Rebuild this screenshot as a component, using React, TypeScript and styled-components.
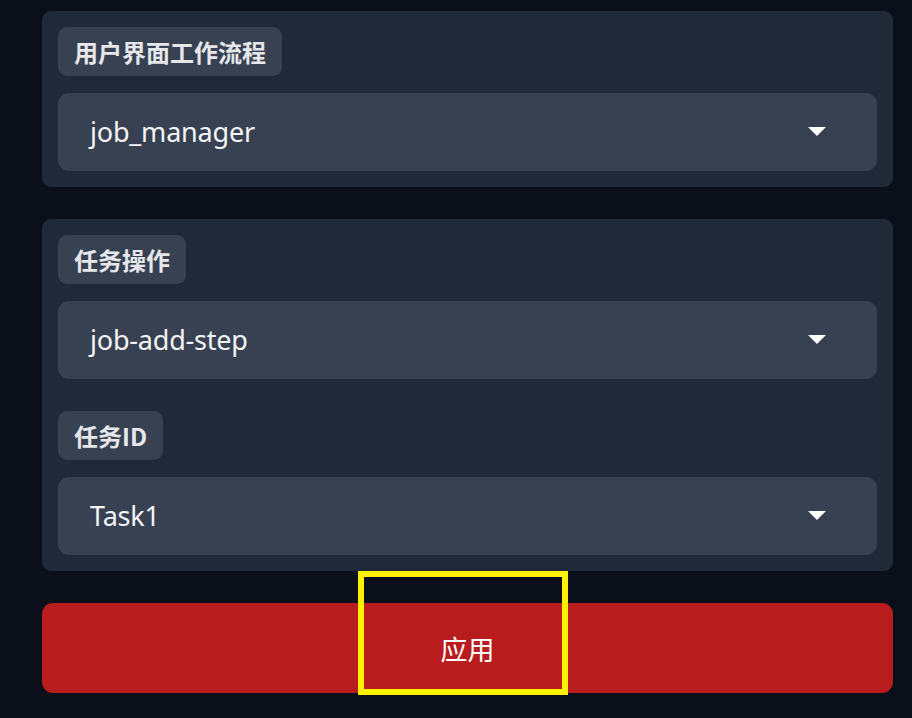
import React from 'react';
import styled, { createGlobalStyle } from 'styled-components';

const GlobalStyle = createGlobalStyle`
  html, body {
    margin: 0;
    padding: 0;
    background: #0b0f19;
  }
  body {
    font-family: 'Noto Sans', 'Noto Sans CJK SC', sans-serif;
  }
`;

interface Field {
  label: string;
  value: string;
}

const groups: Field[][] = [
  [{ label: '用户界面工作流程', value: 'job_manager' }],
  [
    { label: '任务操作', value: 'job-add-step' },
    { label: '任务ID', value: 'Task1' },
  ],
];

const Dropdown: React.FC<Field> = props => {
  return (
    <Block>
      <Label>{props.label}</Label>
      <Select>
        <Value>{props.value}</Value>
        <Caret />
      </Select>
    </Block>
  );
};

const App: React.FC = () => {
  return (
    <Page>
      <GlobalStyle />
      {groups.map((fields, i) => (
        <Panel key={i}>
          {fields.map(f => (
            <Dropdown key={f.label} label={f.label} value={f.value} />
          ))}
        </Panel>
      ))}
      <ApplyButton>
        应用
        <Highlight />
      </ApplyButton>
    </Page>
  );
};

export default App;

const Page = styled.div`
  min-height: 718px;
  box-sizing: border-box;
  padding: 11px 19px 0 42px;
  display: flex;
  flex-direction: column;
  gap: 32px;
`;

const Panel = styled.div`
  background: #1f2937;
  border-radius: 9px;
  padding: 16px;
  display: flex;
  flex-direction: column;
  gap: 32px;
`;

const Block = styled.div`
  display: flex;
  flex-direction: column;
  align-items: flex-start;
  gap: 16.5px;
`;

const Label = styled.span`
  display: inline-flex;
  align-items: center;
  height: 49px;
  box-sizing: border-box;
  padding: 0 16px;
  background: #374151;
  border-radius: 9px;
  color: #e5e7eb;
  font-family: 'Noto Sans CJK SC', 'Noto Sans', sans-serif;
  font-weight: 700;
  font-size: 24px;
`;

const Select = styled.div`
  align-self: stretch;
  height: 78.5px;
  box-sizing: border-box;
  background: #374151;
  border-radius: 11px;
  padding: 0 51px 0 32px;
  display: flex;
  align-items: center;
  justify-content: space-between;
`;

const Value = styled.span`
  color: #f3f4f6;
  font-family: 'Noto Sans', 'Noto Sans CJK SC', sans-serif;
  font-size: 27px;
  letter-spacing: -0.2px;
`;

const Caret = styled.span`
  width: 0;
  height: 0;
  border-left: 9px solid transparent;
  border-right: 9px solid transparent;
  border-top: 9px solid #ffffff;
`;

const ApplyButton = styled.button`
  position: relative;
  height: 90px;
  border: none;
  border-radius: 11px;
  background: #b91c1c;
  color: #ffffff;
  font-family: 'Noto Sans CJK SC', 'Noto Sans', sans-serif;
  font-size: 27px;
  font-weight: 400;
  cursor: pointer;
`;

const Highlight = styled.span`
  position: absolute;
  left: 316px;
  top: -32px;
  width: 210px;
  height: 124px;
  box-sizing: border-box;
  border: 6px solid #fff200;
  pointer-events: none;
`;
